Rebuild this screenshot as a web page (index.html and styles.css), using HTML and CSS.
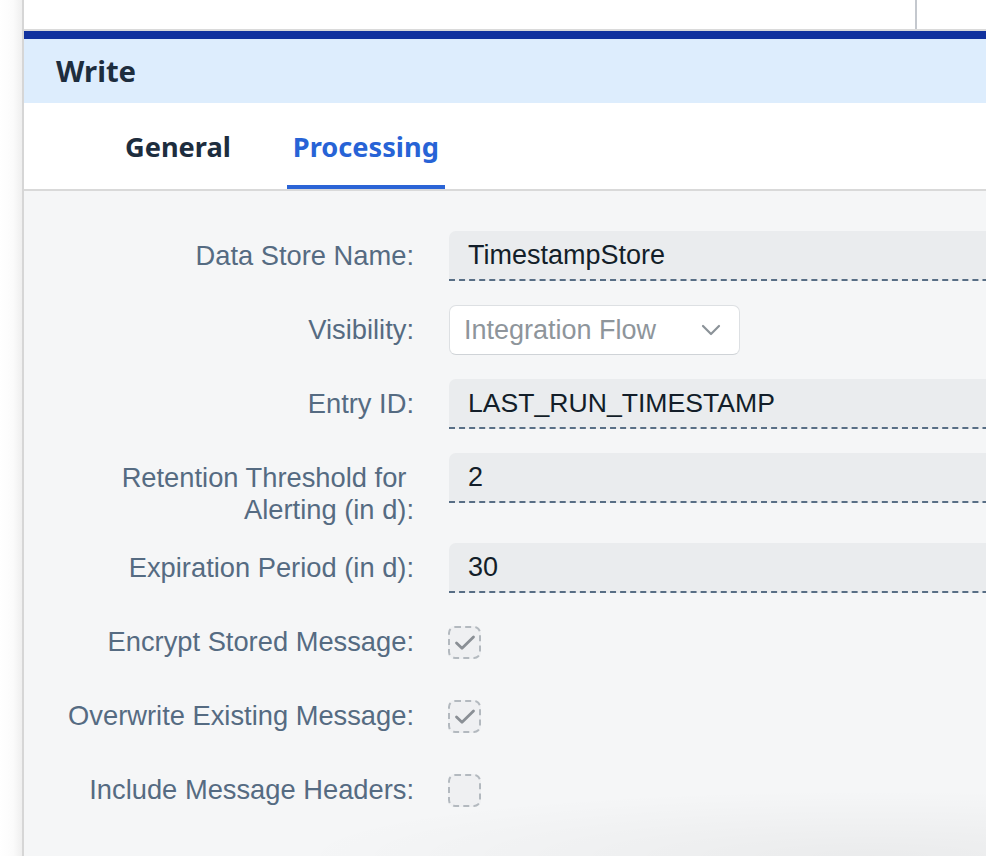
FILE: index.html
```html
<!DOCTYPE html>
<html lang="en">
<head>
<meta charset="utf-8">
<title>Write - Processing</title>
<link rel="stylesheet" href="styles.css">
</head>
<body>
<div class="page">
  <div class="side-strip"></div>
  <div class="panel">
    <div class="top-area">
      <div class="top-divider"></div>
    </div>
    <div class="accent-bar"></div>
    <div class="title-bar"><h1 class="title">Write</h1></div>
    <nav class="tabs">
      <div class="tab">General</div>
      <div class="tab tab-active">Processing</div>
    </nav>
    <div class="content">
      <form class="form">
        <div class="row">
          <label class="label">Data Store Name:</label>
          <div class="field"><div class="input">TimestampStore</div></div>
        </div>
        <div class="row">
          <label class="label">Visibility:</label>
          <div class="field">
            <div class="select">
              <span class="select-text">Integration Flow</span>
              <svg class="chevron" width="20" height="12" viewBox="0 0 20 12"><path d="M2 2 L10 10 L18 2" fill="none" stroke="#8b9298" stroke-width="2.2" stroke-linecap="round" stroke-linejoin="round"/></svg>
            </div>
          </div>
        </div>
        <div class="row">
          <label class="label">Entry ID:</label>
          <div class="field"><div class="input input-caps">LAST_RUN_TIMESTAMP</div></div>
        </div>
        <div class="row">
          <label class="label label-two">Retention Threshold for&nbsp;<br>Alerting (in d):</label>
          <div class="field"><div class="input">2</div></div>
        </div>
        <div class="row">
          <label class="label">Expiration Period (in d):</label>
          <div class="field"><div class="input">30</div></div>
        </div>
        <div class="row">
          <label class="label">Encrypt Stored Message:</label>
          <div class="field">
            <div class="checkbox"><svg width="22" height="17" viewBox="0 0 22 17"><path d="M2.5 9 L8 14.2 L19.5 3" fill="none" stroke="#8a8f95" stroke-width="2.8" stroke-linecap="round" stroke-linejoin="round"/></svg></div>
          </div>
        </div>
        <div class="row">
          <label class="label">Overwrite Existing Message:</label>
          <div class="field">
            <div class="checkbox"><svg width="22" height="17" viewBox="0 0 22 17"><path d="M2.5 9 L8 14.2 L19.5 3" fill="none" stroke="#8a8f95" stroke-width="2.8" stroke-linecap="round" stroke-linejoin="round"/></svg></div>
          </div>
        </div>
        <div class="row">
          <label class="label">Include Message Headers:</label>
          <div class="field"><div class="checkbox"></div></div>
        </div>
      </form>
    </div>
  </div>
</div>
</body>
</html>
```

FILE: styles.css
```css
* { box-sizing: border-box; }
html, body { margin: 0; padding: 0; }
body {
  width: 986px;
  height: 856px;
  overflow: hidden;
  background: #ffffff;
  font-family: "Liberation Sans", Arial, sans-serif;
}
.page {
  display: flex;
  height: 856px;
}
.side-strip {
  width: 24px;
  flex: none;
  background: linear-gradient(to right, #ffffff 0%, #fbfbfb 60%, #efefef 100%);
  border-right: 2px solid #d6d6d6;
}
.panel {
  flex: 1;
  display: flex;
  flex-direction: column;
  min-width: 0;
  overflow: hidden;
}
.top-area {
  height: 31px;
  flex: none;
  background: #ffffff;
  border-bottom: 2px solid #dadada;
  display: flex;
}
.top-divider {
  margin-left: 891px;
  width: 2px;
  background: #c4c8ce;
}
.accent-bar {
  height: 8px;
  flex: none;
  background: #11329e;
}
.title-bar {
  height: 64px;
  flex: none;
  background: #ddedfd;
  display: flex;
  align-items: center;
  padding-left: 32px;
}
.title {
  margin: 0;
  font-family: "Noto Sans", "Open Sans", sans-serif;
  font-size: 29.3px;
  font-weight: 700;
  color: #1d2d3e;
}
.tabs {
  height: 88px;
  flex: none;
  background: #ffffff;
  border-bottom: 2px solid #d9d9d9;
  display: flex;
  align-items: stretch;
  padding-left: 95px;
  gap: 50px;
}
.tab {
  display: flex;
  align-items: center;
  padding: 5px 6px 0;
  font-family: "Noto Sans", "Open Sans", sans-serif;
  font-size: 27.2px;
  font-weight: 700;
  color: #1d2d3e;
  border-bottom: 4px solid transparent;
  border-radius: 4px 4px 0 0;
}
.tab-active {
  color: #2763d6;
  border-bottom-color: #2b64d6;
}
.content {
  flex: 1;
  background: #f5f6f7;
  background-image: radial-gradient(ellipse 60% 10% at 88% 100%, rgba(0,0,0,0.045), rgba(0,0,0,0));
  padding-top: 40px;
}
.form {
  display: flex;
  flex-direction: column;
  gap: 24px;
}
.row {
  display: grid;
  grid-template-columns: 390px 1fr;
  column-gap: 35px;
  align-items: start;
  min-height: 50px;
}
.label {
  text-align: right;
  font-size: 27.3px;
  line-height: 32px;
  color: #556b82;
  padding-top: 9px;
}
.label-two {
  margin-bottom: -7px;
}
.field {
  min-width: 0;
}
.input {
  width: 620px;
  height: 50px;
  background: #eaecee;
  border-radius: 7px 7px 0 0;
  border-bottom: 2px dashed #586e85;
  padding-left: 19px;
  font-size: 27px;
  line-height: 48px;
  color: #131e29;
}
.input-caps {
  font-size: 26.6px;
}
.select {
  width: 291px;
  height: 50px;
  background: #ffffff;
  border: 1px solid #dde0e3;
  border-bottom-color: #cfd3d7;
  border-radius: 7px;
  padding-left: 14px;
  padding-right: 18px;
  display: flex;
  align-items: center;
  justify-content: space-between;
}
.select-text {
  font-size: 27px;
  color: #8e959b;
}
.chevron { display: block; }
.checkbox {
  width: 33px;
  height: 33px;
  margin-top: 9px;
  margin-left: -1px;
  border: 2px dashed #b3b9bf;
  border-radius: 7px;
  background: #eff0f2;
  display: flex;
  align-items: center;
  justify-content: center;
}
.checkbox svg { display: block; }
```
